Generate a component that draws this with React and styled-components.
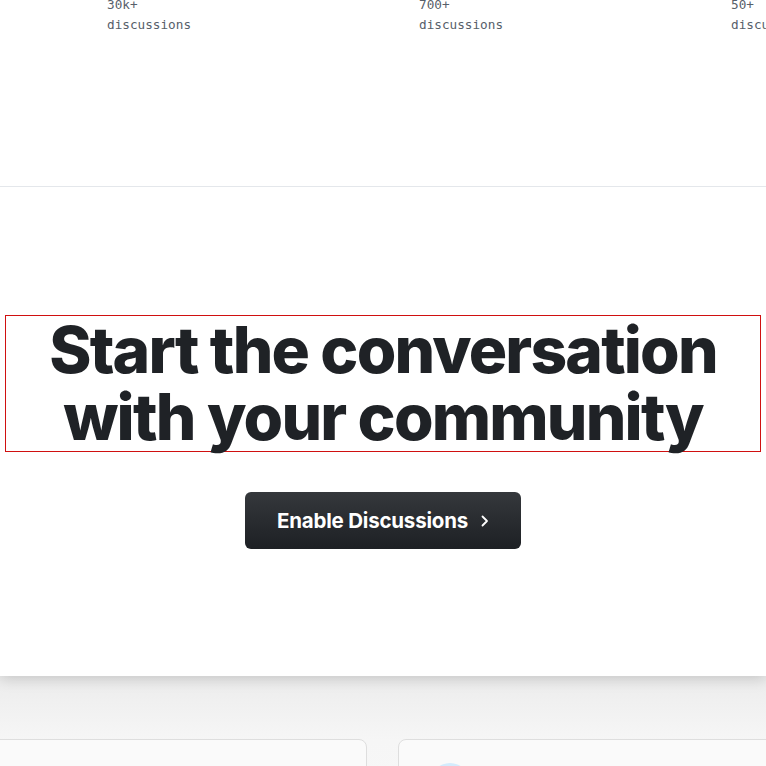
import React from 'react';
import styled, { createGlobalStyle } from 'styled-components';

const GlobalStyle = createGlobalStyle`
  html, body {
    margin: 0;
    padding: 0;
    background: #f8f8f8;
    overflow: hidden;
  }
  body {
    font-family: 'Inter', 'Liberation Sans', sans-serif;
  }
`;

const Page = styled.div`
  width: 766px;
  height: 766px;
  overflow: hidden;
  display: flex;
  flex-direction: column;
`;

const TopBand = styled.div`
  background: #ffffff;
  position: relative;
  z-index: 1;
  box-shadow: 0 2px 14px rgba(0, 0, 0, 0.18);
`;

const StatsRow = styled.div`
  display: grid;
  grid-template-columns: repeat(3, 312px);
  padding: 0 0 0 107px;
  margin-top: -5px;
  height: 192px;
  border-bottom: 1px solid #e4e7eb;
  box-sizing: border-box;
`;

const Stat = styled.div`
  font-family: 'DejaVu Sans Mono', 'Liberation Mono', monospace;
  font-size: 12.7px;
  line-height: 20px;
  color: #57606a;
  white-space: nowrap;
`;

const CtaSection = styled.section`
  display: flex;
  flex-direction: column;
  align-items: center;
  padding: 128px 5px 127px;
`;

const Heading = styled.h1`
  margin: 0;
  align-self: stretch;
  border: 1px solid #d01010;
  text-align: center;
  font-family: 'Inter', 'Liberation Sans', sans-serif;
  font-weight: 800;
  font-size: 64px;
  line-height: 67px;
  letter-spacing: -0.028em;
  color: #1f2226;
  padding: 0 0 1px;
`;

const EnableButton = styled.button`
  margin-top: 40px;
  width: 276px;
  height: 57px;
  border: none;
  border-radius: 6px;
  background: linear-gradient(180deg, #35383c 0%, #1d2024 100%);
  color: #ffffff;
  font-family: 'Inter', 'Liberation Sans', sans-serif;
  font-weight: 700;
  font-size: 20.5px;
  letter-spacing: -0.01em;
  display: flex;
  align-items: center;
  justify-content: center;
  gap: 11px;
  cursor: pointer;
  padding: 0 0 0 2px;
`;

const Chevron = styled.svg`
  width: 12px;
  height: 14px;
`;

const LowerBand = styled.div`
  flex: 1;
  background: linear-gradient(180deg, #ececec 0%, #f6f6f6 35%, #f9f9f9 100%);
  padding-top: 63px;
`;

const CardsRow = styled.div`
  display: grid;
  grid-template-columns: 400px 400px;
  gap: 31px;
  margin-left: -33px;
`;

const Card = styled.div`
  height: 120px;
  background: #fafafa;
  border: 1px solid #dedede;
  border-radius: 8px;
  padding: 23px 31px;
  box-sizing: border-box;
`;

const Avatar = styled.div`
  width: 40px;
  height: 40px;
  border-radius: 50%;
  background: #d4ecfd;
`;

const stats = ['30k+', '700+', '50+'];

export default function App() {
  return (
    <>
      <GlobalStyle />
      <Page>
        <TopBand>
          <StatsRow>
            {stats.map((s) => (
              <Stat key={s}>
                {s}
                <br />
                discussions
              </Stat>
            ))}
          </StatsRow>
          <CtaSection>
            <Heading>
              Start the conversation
              <br />
              with your community
            </Heading>
            <EnableButton>
              Enable Discussions
              <Chevron viewBox="0 0 12 14" fill="none">
                <path d="M3.5 2.5 L8 7 L3.5 11.5" stroke="#ffffff" strokeWidth="1.8" strokeLinecap="round" strokeLinejoin="round" />
              </Chevron>
            </EnableButton>
          </CtaSection>
        </TopBand>
        <LowerBand>
          <CardsRow>
            <Card />
            <Card>
              <Avatar />
            </Card>
          </CardsRow>
        </LowerBand>
      </Page>
    </>
  );
}
